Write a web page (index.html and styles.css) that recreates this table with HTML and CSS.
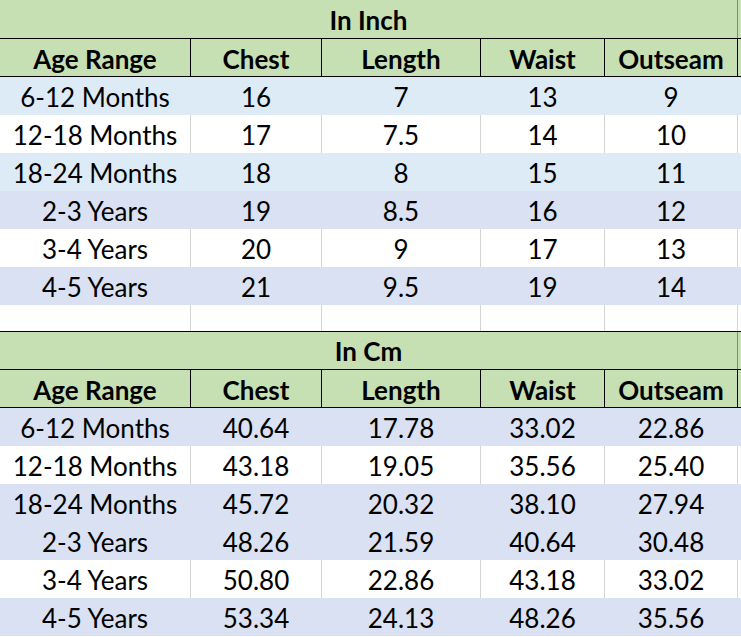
FILE: index.html
```html
<!DOCTYPE html>
<html>
<head>
<meta charset="utf-8">
<link rel="stylesheet" href="styles.css">
</head>
<body>
<div class="sheet">
  <div class="title first"><span class="title-text">In Inch</span><span class="pad"></span></div>
  <div class="row head"><div>Age Range</div><div>Chest</div><div>Length</div><div>Waist</div><div>Outseam</div><div class="pad"></div></div>
  <div class="row blue"><div>6-12 Months</div><div>16</div><div>7</div><div>13</div><div>9</div><div class="pad"></div></div>
  <div class="row white"><div>12-18 Months</div><div>17</div><div>7.5</div><div>14</div><div>10</div><div class="pad"></div></div>
  <div class="row blue"><div>18-24 Months</div><div>18</div><div>8</div><div>15</div><div>11</div><div class="pad"></div></div>
  <div class="row lav"><div>2-3 Years</div><div>19</div><div>8.5</div><div>16</div><div>12</div><div class="pad"></div></div>
  <div class="row white"><div>3-4 Years</div><div>20</div><div>9</div><div>17</div><div>13</div><div class="pad"></div></div>
  <div class="row lav"><div>4-5 Years</div><div>21</div><div>9.5</div><div>19</div><div>14</div><div class="pad"></div></div>
  <div class="row white empty"><div></div><div></div><div></div><div></div><div></div><div class="pad"></div></div>

  <div class="title"><span class="title-text">In Cm</span><span class="pad"></span></div>
  <div class="row head"><div>Age Range</div><div>Chest</div><div>Length</div><div>Waist</div><div>Outseam</div><div class="pad"></div></div>
  <div class="row lav"><div>6-12 Months</div><div>40.64</div><div>17.78</div><div>33.02</div><div>22.86</div><div class="pad"></div></div>
  <div class="row white"><div>12-18 Months</div><div>43.18</div><div>19.05</div><div>35.56</div><div>25.40</div><div class="pad"></div></div>
  <div class="row lav"><div>18-24 Months</div><div>45.72</div><div>20.32</div><div>38.10</div><div>27.94</div><div class="pad"></div></div>
  <div class="row lav"><div>2-3 Years</div><div>48.26</div><div>21.59</div><div>40.64</div><div>30.48</div><div class="pad"></div></div>
  <div class="row white"><div>3-4 Years</div><div>50.80</div><div>22.86</div><div>43.18</div><div>33.02</div><div class="pad"></div></div>
  <div class="row lav"><div>4-5 Years</div><div>53.34</div><div>24.13</div><div>48.26</div><div>35.56</div><div class="pad"></div></div>
</div>
</body>
</html>
```

FILE: styles.css
```css
html, body {
  margin: 0;
  padding: 0;
  background: #ffffff;
}

.sheet {
  width: 741px;
  height: 637px;
  overflow: hidden;
  font-family: Lato, "Open Sans", sans-serif;
  font-size: 26px;
  color: #000000;
}

.title {
  display: grid;
  grid-template-columns: 738px 3px;
  height: 38px;
  box-sizing: border-box;
  border-bottom: 1px solid #000000;
  background: #c6e0b4;
  font-weight: 700;
}

.title.first {
  height: 39px;
}

.title-text {
  display: flex;
  align-items: center;
  justify-content: center;
  border-right: 1px solid #7f8a78;
  padding-top: 1px;
}

.row {
  display: grid;
  grid-template-columns: 191px 131px 159px 124px 133px 3px;
  height: 38px;
  box-sizing: border-box;
}

.row > div {
  display: flex;
  align-items: center;
  justify-content: center;
  box-sizing: border-box;
  border-right: 1px solid transparent;
  white-space: nowrap;
  padding-top: 2px;
}

.row > .pad {
  border-right: none;
}

.head {
  background: #c6e0b4;
  font-weight: 700;
  border-bottom: 1px solid #000000;
}

.head > div {
  border-right-color: #000000;
}

.blue {
  background: #ddebf7;
}

.lav {
  background: #d9e1f2;
}

.white {
  background: #ffffff;
}

.white > div {
  border-right-color: #d4d4d4;
}

.empty {
  height: 27px;
  border-bottom: 1px solid #000000;
}
```
